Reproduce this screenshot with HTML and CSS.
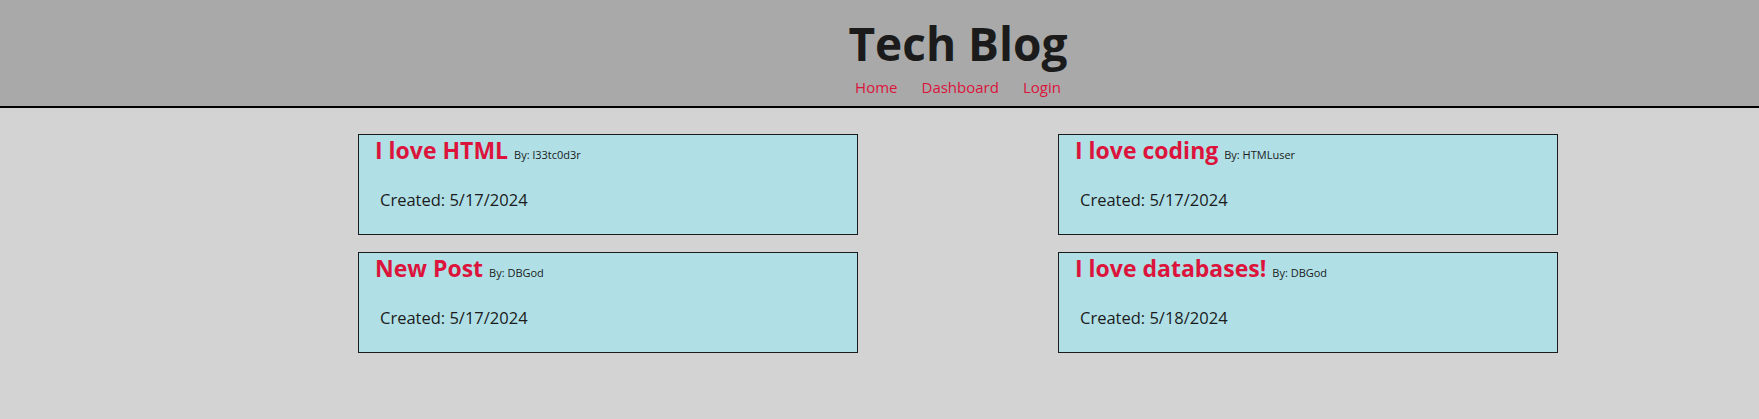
FILE: index.html
```html
<!DOCTYPE html>
<html lang="en">
<head>
<meta charset="utf-8">
<title>Tech Blog</title>
<link rel="stylesheet" href="styles.css">
</head>
<body>
<header class="site-header">
  <h1 class="site-title">Tech Blog</h1>
  <nav class="site-nav">
    <a href="#" class="nav-link">Home</a>
    <a href="#" class="nav-link">Dashboard</a>
    <a href="#" class="nav-link">Login</a>
  </nav>
</header>
<main class="posts">
  <article class="post">
    <h2 class="post-title">I love HTML <span class="post-author">By: l33tc0d3r</span></h2>
    <p class="post-date">Created: 5/17/2024</p>
  </article>
  <article class="post">
    <h2 class="post-title">I love coding <span class="post-author">By: HTMLuser</span></h2>
    <p class="post-date">Created: 5/17/2024</p>
  </article>
  <article class="post">
    <h2 class="post-title">New Post <span class="post-author">By: DBGod</span></h2>
    <p class="post-date">Created: 5/17/2024</p>
  </article>
  <article class="post">
    <h2 class="post-title">I love databases! <span class="post-author">By: DBGod</span></h2>
    <p class="post-date">Created: 5/18/2024</p>
  </article>
</main>
</body>
</html>
```

FILE: styles.css
```css
html, body {
  margin: 0;
  padding: 0;
}

body {
  background: #d3d3d3;
  font-family: "Open Sans", "Noto Sans", sans-serif;
  color: #1b1b1b;
  min-height: 419px;
}

.site-header {
  background: #a9a9a9;
  border-bottom: 2px solid #000;
  padding: 15px 0 9px 157px;
  display: flex;
  flex-direction: column;
  align-items: center;
}

.site-title {
  margin: 0;
  font-size: 46px;
  line-height: 56px;
  font-weight: 700;
  color: #1b1b1b;
}

.site-nav {
  margin-top: 6px;
  display: flex;
  gap: 24px;
  line-height: 20px;
  font-size: 15px;
}

.nav-link {
  color: #dc143c;
  text-decoration: none;
}

.posts {
  display: grid;
  grid-template-columns: 500px 500px;
  column-gap: 200px;
  row-gap: 17px;
  justify-content: center;
  padding: 26px 0 0 157px;
}

.post {
  box-sizing: border-box;
  height: 101px;
  background: #b0e0e6;
  border: 1px solid #1b1b1b;
  padding: 0 16px;
}

.post-title {
  margin: 0;
  font-size: 23px;
  line-height: 31px;
  font-weight: 700;
  color: #dc143c;
}

.post-author {
  font-size: 11px;
  font-weight: 400;
  color: #1b1b1b;
}

.post-date {
  margin: 18px 0 0;
  padding-left: 5px;
  font-size: 16.5px;
  line-height: 24px;
}
```
